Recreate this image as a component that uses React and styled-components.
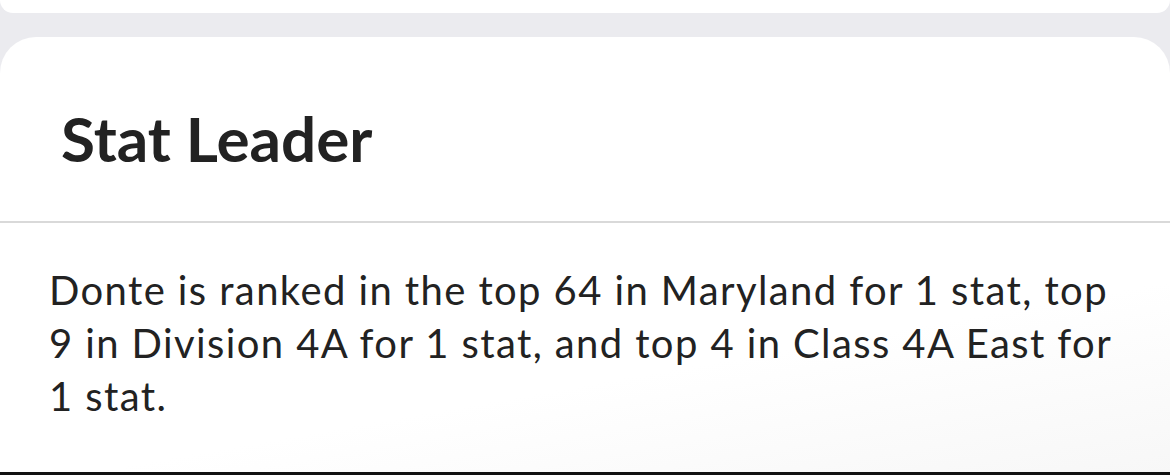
import React from 'react';
import styled, { createGlobalStyle } from 'styled-components';

const GlobalStyle = createGlobalStyle`
  html, body {
    margin: 0;
    padding: 0;
    background: #ebebef;
  }
  body {
    font-family: "Lato", "Open Sans", sans-serif;
    color: #222222;
  }
`;

const Page = styled.div`
  width: 1170px;
  height: 475px;
  display: flex;
  flex-direction: column;
  overflow: hidden;
  background: #ebebef;
`;

const PrevCard = styled.div`
  height: 13px;
  flex-shrink: 0;
  background: #ffffff;
  border-radius: 0 0 32px 32px;
`;

const Card = styled.section`
  flex: 1;
  margin-top: 24px;
  background: linear-gradient(170deg, #ffffff 70%, #f7f7f7 100%);
  border-radius: 36px 36px 0 0;
  display: flex;
  flex-direction: column;
`;

const Header = styled.header`
  height: 186px;
  display: flex;
  align-items: center;
  padding: 18px 0 0 61px;
  box-sizing: border-box;
  border-bottom: 2px solid #d9d9d9;
`;

const Title = styled.h2`
  margin: 0;
  font-family: "Lato", "Open Sans", sans-serif;
  font-weight: 700;
  font-size: 62px;
  color: #222222;
`;

const Body = styled.p`
  flex: 1;
  margin: 0;
  padding: 41px 44px 0 49px;
  font-size: 40px;
  line-height: 53px;
  letter-spacing: 1.4px;
  color: #222222;
`;

const BottomBar = styled.div`
  height: 3px;
  background: #111111;
`;

export default function App() {
  return (
    <Page>
      <GlobalStyle />
      <PrevCard />
      <Card>
        <Header>
          <Title>Stat Leader</Title>
        </Header>
        <Body>
          Donte is ranked in the top 64 in Maryland for 1 stat, top 9 in Division 4A for 1 stat, and top 4 in Class 4A East for 1 stat.
        </Body>
        <BottomBar />
      </Card>
    </Page>
  );
}
